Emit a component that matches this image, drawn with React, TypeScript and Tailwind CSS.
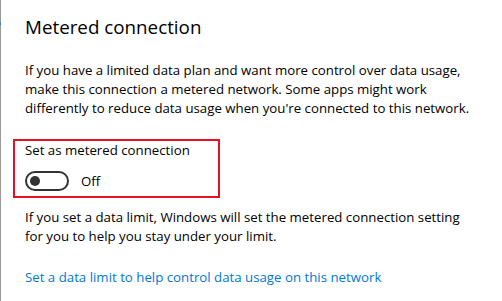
import React from "react";

function Toggle({ label }: { label: string }) {
  return (
    <div className="flex h-[20px] items-center gap-[12px]">
      <div className="flex h-[20px] w-[44px] items-center rounded-full border-2 border-[#333333] px-[3px]">
        <div className="h-[10px] w-[10px] rounded-full bg-[#333333]" />
      </div>
      <span className="text-[13.25px] leading-[19px] text-black">{label}</span>
    </div>
  );
}

export default function App() {
  return (
    <div
      className="relative h-[301px] w-[502px] overflow-hidden bg-white text-black"
      style={{ fontFamily: '"Open Sans", "Noto Sans", sans-serif' }}
    >
      {/* edge of the navigation pane */}
      <div className="absolute left-0 top-0 h-full w-px bg-[#9a9a9a]" />
      <div className="absolute left-0 top-[22px] h-[3px] w-px bg-[#3a7fc4]" />

      <div className="flex flex-col items-start pl-[25px] pt-[14px]">
        <h1 className="text-[18.8px] font-normal leading-[26px]">Metered connection</h1>

        <p className="mt-[21px] whitespace-nowrap text-[13.25px] leading-[19px]">
          If you have a limited data plan and want more control over data usage,
          <br />
          make this connection a metered network. Some apps might work
          <br />
          differently to reduce data usage when you're connected to this network.
        </p>

        <div className="-ml-[12px] mt-[21px] w-[207px] border-2 border-[#e81123] pb-[5px] pl-[10px]">
          <div className="text-[13.25px] leading-[19px]">Set as metered connection</div>
          <div className="mt-[11px]">
            <Toggle label="Off" />
          </div>
        </div>

        <p className="mt-[10px] whitespace-nowrap text-[13.25px] leading-[19px]">
          If you set a data limit, Windows will set the metered connection setting
          <br />
          for you to help you stay under your limit.
        </p>

        <a className="mt-[22px] whitespace-nowrap text-[13.25px] leading-[19px] text-[#0078d7]" href="#">
          Set a data limit to help control data usage on this network
        </a>
      </div>
    </div>
  );
}
